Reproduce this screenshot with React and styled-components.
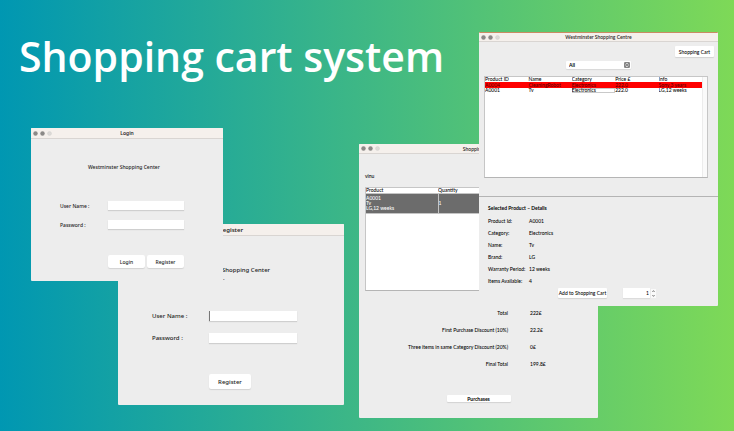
import React from "react";
import styled, { createGlobalStyle, css } from "styled-components";

const GlobalStyle = createGlobalStyle`
  * { box-sizing: border-box; }
  body { margin: 0; }
  button, input, select { font: inherit; color: inherit; margin: 0; }
`;

const Stage = styled.main`
  position: relative;
  min-height: 100vh;
  overflow: hidden;
  background: linear-gradient(90deg, #0097b2, #7ed957);
  font-family: "Noto Sans", "Open Sans", sans-serif;
  color: #1c1c1c;
`;

const Headline = styled.h1`
  margin: 0;
  padding: 28px 19px;
  font: 600 41px/56px "Open Sans", "Noto Sans", sans-serif;
  color: #fff;
  white-space: nowrap;
`;

const Window = styled.section`
  position: absolute;
  left: ${(p) => p.$x}px;
  top: ${(p) => p.$y}px;
  width: ${(p) => p.$w}px;
  background: #ededed;
  border-radius: 1px;
  font-size: ${(p) => p.$size}px;
  line-height: 8px;
  white-space: nowrap;
  overflow: hidden;
  ${(p) => p.$compact && css`
    font-family: Lato, "Noto Sans", sans-serif;
    font-weight: 500;
    color: #000;
  `}
`;

const TitleBar = styled.header`
  display: grid;
  grid-template-columns: 1fr auto 1fr;
  align-items: center;
  height: ${(p) => p.$h}px;
  padding: 0 2px;
  background: #f5f0ec;
  border-bottom: 1px solid #d9d5d2;
  ${(p) => p.$edge && css`border-top: 1px solid #c98c62;`}
`;

const WindowTitle = styled.h2`
  margin: 0;
  font-size: inherit;
  font-weight: 600;
  color: #2c2a29;
`;

const Lights = styled.svg`
  display: block;
  width: 20px;
  height: 5px;
`;

function Bar({ title, h, edge }) {
  return (
    <TitleBar $h={h} $edge={edge}>
      <Lights viewBox="0 0 20 5" aria-hidden="true">
        <circle cx="2.5" cy="2.5" r="2.2" fill="#8b8987" />
        <circle cx="9.5" cy="2.5" r="2.2" fill="#8b8987" />
        <circle cx="16.5" cy="2.5" r="2" fill="#dcd9d7" stroke="#cfcccb" strokeWidth=".4" />
      </Lights>
      <WindowTitle>{title}</WindowTitle>
    </TitleBar>
  );
}

const Button = styled.button`
  height: ${(p) => p.$h}px;
  width: ${(p) => (p.$w ? p.$w + "px" : "auto")};
  padding: 0;
  border: 0;
  border-radius: ${(p) => (p.$h > 12 ? 2 : 1)}px;
  background: #fff;
  box-shadow: 0 1px 1px #d2d2d2;
  font-weight: ${(p) => (p.$strong ? 700 : 500)};
  line-height: 8px;
  display: flex;
  align-items: center;
  justify-content: center;
`;

const TextField = styled.input`
  width: 100%;
  height: ${(p) => p.$h}px;
  padding: 0 1px;
  border: 0;
  outline: 0;
  background: #fff;
  box-shadow: 0 1px 1px #cfcfcf;
  ${(p) => p.$active && css`border-left: 1px solid #777;`}
`;

const AuthForm = styled.form`
  padding: ${(p) => p.$pad};
`;

const AuthHeading = styled.p`
  margin: 0 0 ${(p) => p.$gap}px;
  padding-left: ${(p) => p.$indent}px;
  font-weight: 500;
`;

const Subline = styled.span`
  display: block;
  padding-left: ${(p) => p.$indent}px;
`;

const Fields = styled.div`
  display: grid;
  grid-template-columns: ${(p) => p.$label}px ${(p) => p.$field}px;
  row-gap: ${(p) => p.$gap}px;
  align-items: center;
`;

const FieldLabel = styled.label`
  font-weight: 500;
`;

const Actions = styled.div`
  display: flex;
  gap: 2px;
  padding: ${(p) => p.$top}px 0 0 ${(p) => p.$left}px;
`;

const TableFrame = styled.div`
  display: flex;
  height: ${(p) => p.$h}px;
  background: #fff;
  border: 1px solid #c6c6c6;
  border-bottom-color: #b5b5b5;
`;

const Table = styled.table`
  flex: 1;
  width: 100%;
  align-self: flex-start;
  table-layout: fixed;
  border-collapse: collapse;
  th, td { padding: 0; text-align: left; font-weight: 500; overflow: hidden; }
`;

const ProductColumn = styled.col`
  width: 72px;
`;

const ScrollTrack = styled.div`
  flex: none;
  width: 5px;
  background: #fafafa;
  border-left: 1px solid #ececec;
`;

const ProductRow = styled.tr`
  height: ${(p) => (p.$alert ? 6 : 5)}px;
  line-height: 5px;
  background: ${(p) => (p.$alert ? "#ff0000" : "transparent")};
  color: ${(p) => (p.$alert ? "#5c0000" : "#000")};
`;

const HeadRow = styled.tr`
  line-height: 5px;
`;

const Cell = styled.td`
  ${(p) => p.$focus && css`box-shadow: inset 0 0 0 1px #c9c9c9;`}
`;

const SelectedCell = styled.td`
  height: 20px;
  line-height: 5px;
  background: #6c6c6c;
  border: 1px solid #c4c4c4;
  border-left-width: 0;
  color: #fff;
`;

const CartBody = styled.div`
  padding: 18px 6px 16px;
`;

const Customer = styled.p`
  margin: 0 0 7px;
`;

const Totals = styled.dl`
  display: grid;
  grid-template-columns: 143px 1fr;
  column-gap: 22px;
  row-gap: 9px;
  margin: 18px 0 27px;
  dt { text-align: right; }
  dd { margin: 0; }
`;

const Centered = styled.div`
  display: flex;
  justify-content: center;
`;

const ShopTop = styled.div`
  padding: 4px 10px 18px 5px;
`;

const CartButtonRow = styled.div`
  display: flex;
  justify-content: flex-end;
  margin: 0 -6px 4px 0;
`;

const SelectBox = styled.div`
  position: relative;
  width: 65px;
  margin: 0 auto 7px 82px;
`;

const Select = styled.select`
  display: block;
  appearance: none;
  width: 100%;
  height: 8px;
  padding: 0 8px 0 3px;
  border: 0;
  border-radius: 1px;
  background: #fff;
  box-shadow: 0 1px 1px #d8d8d8;
  font-weight: 700;
  line-height: 8px;
`;

const SelectIcon = styled.svg`
  position: absolute;
  right: 1px;
  top: 1px;
  width: 6px;
  height: 6px;
  pointer-events: none;
`;

const Details = styled.div`
  border-top: 1px solid #b4b4b4;
  padding: 7px 9px 8px;
`;

const DetailsTitle = styled.h3`
  margin: 0 0 5px;
  font-size: inherit;
  font-weight: 700;
`;

const DetailList = styled.dl`
  display: grid;
  grid-template-columns: 41px 1fr;
  row-gap: 4px;
  margin: 0 0 3px;
  dd { margin: 0; }
`;

const Purchase = styled.div`
  display: flex;
  align-items: center;
  padding-left: 70px;
`;

const Quantity = styled.input`
  width: 27px;
  height: 10px;
  margin-left: 16px;
  padding: 0 1px;
  border: 0;
  background: #fff;
  box-shadow: 0 1px 1px #dcdcdc;
  text-align: right;
  appearance: textfield;
  &::-webkit-inner-spin-button { appearance: none; margin: 0; }
`;

const Stepper = styled.svg`
  width: 5px;
  height: 9px;
  margin-left: 1px;
  background: #fafafa;
`;

const products = [
  ["A0004", "CleaningRobot", "Electronics", "222.0", "Sony,3 years"],
  ["A0001", "Tv", "Electronics", "222.0", "LG,12 weeks"],
];

const details = [
  ["Product Id:", "A0001"],
  ["Category:", "Electronics"],
  ["Name:", "Tv"],
  ["Brand:", "LG"],
  ["Warranty Period:", "12 weeks"],
  ["Items Available:", "4"],
];

const totals = [
  ["Total", "222£"],
  ["First Purchase Discount (10%)", "22.2£"],
  ["Three items in same Category Discount (20%)", "0£"],
  ["Final Total", "199.8£"],
];

function RegisterWindow() {
  return (
    <Window $x={118} $y={224} $w={226} $size={6}>
      <Bar title="Register" h={12} />
      <AuthForm $pad="30px 34px 16px" onSubmit={(e) => e.preventDefault()}>
        <AuthHeading $indent={32} $gap={29}>
          Westminster Shopping Center
          <Subline $indent={39}>.</Subline>
        </AuthHeading>
        <Fields $label={57} $field={88} $gap={12}>
          <FieldLabel htmlFor="reg-user">User Name :</FieldLabel>
          <TextField id="reg-user" $h={10} $active />
          <FieldLabel htmlFor="reg-pass">Password :</FieldLabel>
          <TextField id="reg-pass" type="password" $h={10} />
        </Fields>
        <Actions $top={31} $left={57}>
          <Button $w={42} $h={15}>Register</Button>
        </Actions>
      </AuthForm>
    </Window>
  );
}

function LoginWindow() {
  return (
    <Window $x={31} $y={128} $w={192} $size={5}>
      <Bar title="Login" h={11} />
      <AuthForm $pad="24px 29px 13px" onSubmit={(e) => e.preventDefault()}>
        <AuthHeading $indent={28} $gap={30}>Westminster Shopping Center</AuthHeading>
        <Fields $label={48} $field={76} $gap={10}>
          <FieldLabel htmlFor="login-user">User Name :</FieldLabel>
          <TextField id="login-user" $h={9} />
          <FieldLabel htmlFor="login-pass">Password :</FieldLabel>
          <TextField id="login-pass" type="password" $h={9} />
        </Fields>
        <Actions $top={26} $left={48}>
          <Button $w={37} $h={13}>Login</Button>
          <Button type="button" $w={37} $h={13}>Register</Button>
        </Actions>
      </AuthForm>
    </Window>
  );
}

function CartWindow() {
  return (
    <Window $x={359} $y={144} $w={239} $size={5} $compact>
      <Bar title="Shopping Cart" h={10} />
      <CartBody>
        <Customer>vinu</Customer>
        <TableFrame $h={104}>
          <Table>
            <colgroup><ProductColumn /><col /></colgroup>
            <thead>
              <HeadRow><th>Product</th><th>Quantity</th></HeadRow>
            </thead>
            <tbody>
              <tr>
                <SelectedCell>A0001<br />Tv<br />LG,12 weeks</SelectedCell>
                <SelectedCell>1</SelectedCell>
              </tr>
            </tbody>
          </Table>
        </TableFrame>
        <Totals>
          {totals.map(([k, v]) => (
            <React.Fragment key={k}><dt>{k}</dt><dd>{v}</dd></React.Fragment>
          ))}
        </Totals>
        <Centered><Button $w={64} $h={7} $strong>Purchases</Button></Centered>
      </CartBody>
    </Window>
  );
}

function ShopWindow() {
  return (
    <Window $x={479} $y={32} $w={239} $size={5} $compact>
      <Bar title="Westminster Shopping Centre" h={10} edge />
      <ShopTop>
        <CartButtonRow><Button $w={39} $h={11}>Shopping Cart</Button></CartButtonRow>
        <SelectBox>
          <Select aria-label="Category" defaultValue="All">
            <option>All</option>
            <option>Electronics</option>
            <option>Clothing</option>
          </Select>
          <SelectIcon viewBox="0 0 6 6" aria-hidden="true">
            <rect width="6" height="6" rx="1.2" fill="#858585" />
            <path d="M1.6 2.5 3 1.1 4.4 2.5M1.6 3.5 3 4.9 4.4 3.5" fill="none" stroke="#fff" strokeWidth=".7" />
          </SelectIcon>
        </SelectBox>
        <TableFrame $h={102}>
          <Table>
            <thead>
              <HeadRow>
                <th>Product ID</th><th>Name</th><th>Category</th><th>Price £</th><th>Info</th>
              </HeadRow>
            </thead>
            <tbody>
              {products.map((row, r) => (
                <ProductRow key={row[0]} $alert={r === 0}>
                  {row.map((text, c) => <Cell key={c} $focus={r === 1 && c === 2}>{text}</Cell>)}
                </ProductRow>
              ))}
            </tbody>
          </Table>
          <ScrollTrack />
        </TableFrame>
      </ShopTop>
      <Details>
        <DetailsTitle>Selected Product – Details</DetailsTitle>
        <DetailList>
          {details.map(([k, v]) => (
            <React.Fragment key={k}><dt>{k}</dt><dd>{v}</dd></React.Fragment>
          ))}
        </DetailList>
        <Purchase>
          <Button $w={49} $h={10}>Add to Shopping Cart</Button>
          <Quantity type="number" aria-label="Quantity" defaultValue={1} />
          <Stepper viewBox="0 0 5 9" aria-hidden="true">
            <path d="M1.4 3 2.5 1.6 3.6 3M1.4 6 2.5 7.4 3.6 6" fill="none" stroke="#555" strokeWidth=".7" />
          </Stepper>
        </Purchase>
      </Details>
    </Window>
  );
}

export default function App() {
  return (
    <Stage>
      <GlobalStyle />
      <Headline>Shopping cart system</Headline>
      <RegisterWindow />
      <LoginWindow />
      <CartWindow />
      <ShopWindow />
    </Stage>
  );
}
